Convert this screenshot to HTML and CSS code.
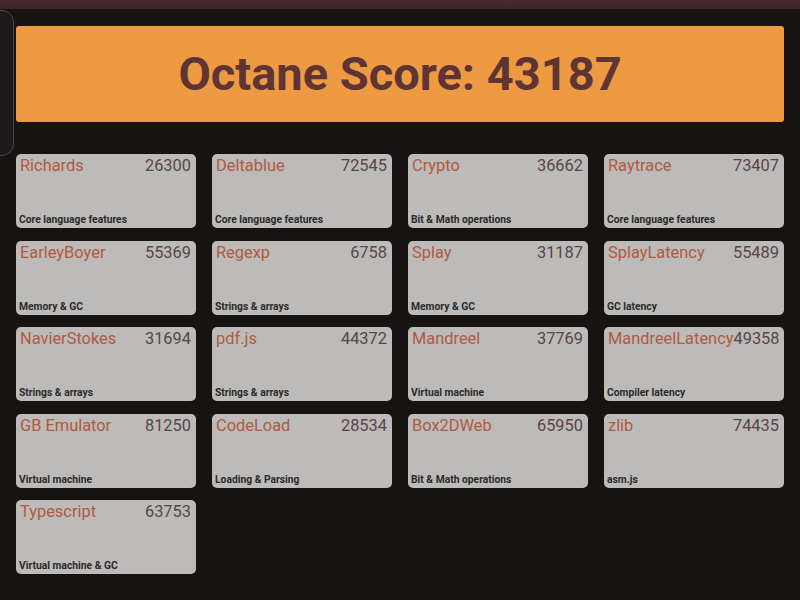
FILE: index.html
```html
<!DOCTYPE html>
<html>
<head>
<meta charset="utf-8">
<link rel="stylesheet" href="styles.css">
</head>
<body>
<div class="topbar"></div>
<div class="side-panel"></div>
<main class="page">
  <div class="banner">Octane Score: 43187</div>
  <div class="grid">
    <div class="card"><div class="head"><span class="name">Richards</span><span class="value">26300</span></div><div class="desc">Core language features</div></div>
    <div class="card"><div class="head"><span class="name">Deltablue</span><span class="value">72545</span></div><div class="desc">Core language features</div></div>
    <div class="card"><div class="head"><span class="name">Crypto</span><span class="value">36662</span></div><div class="desc">Bit &amp; Math operations</div></div>
    <div class="card"><div class="head"><span class="name">Raytrace</span><span class="value">73407</span></div><div class="desc">Core language features</div></div>
    <div class="card"><div class="head"><span class="name">EarleyBoyer</span><span class="value">55369</span></div><div class="desc">Memory &amp; GC</div></div>
    <div class="card"><div class="head"><span class="name">Regexp</span><span class="value">6758</span></div><div class="desc">Strings &amp; arrays</div></div>
    <div class="card"><div class="head"><span class="name">Splay</span><span class="value">31187</span></div><div class="desc">Memory &amp; GC</div></div>
    <div class="card"><div class="head"><span class="name">SplayLatency</span><span class="value">55489</span></div><div class="desc">GC latency</div></div>
    <div class="card"><div class="head"><span class="name">NavierStokes</span><span class="value">31694</span></div><div class="desc">Strings &amp; arrays</div></div>
    <div class="card"><div class="head"><span class="name">pdf.js</span><span class="value">44372</span></div><div class="desc">Strings &amp; arrays</div></div>
    <div class="card"><div class="head"><span class="name">Mandreel</span><span class="value">37769</span></div><div class="desc">Virtual machine</div></div>
    <div class="card"><div class="head"><span class="name">MandreelLatency</span><span class="value">49358</span></div><div class="desc">Compiler latency</div></div>
    <div class="card"><div class="head"><span class="name">GB Emulator</span><span class="value">81250</span></div><div class="desc">Virtual machine</div></div>
    <div class="card"><div class="head"><span class="name">CodeLoad</span><span class="value">28534</span></div><div class="desc">Loading &amp; Parsing</div></div>
    <div class="card"><div class="head"><span class="name">Box2DWeb</span><span class="value">65950</span></div><div class="desc">Bit &amp; Math operations</div></div>
    <div class="card"><div class="head"><span class="name">zlib</span><span class="value">74435</span></div><div class="desc">asm.js</div></div>
    <div class="card"><div class="head"><span class="name">Typescript</span><span class="value">63753</span></div><div class="desc">Virtual machine &amp; GC</div></div>
  </div>
</main>
</body>
</html>
```
FILE: styles.css
```css
html, body {
  margin: 0;
  padding: 0;
  background: #161312;
  font-family: Roboto, "Liberation Sans", sans-serif;
  width: 800px;
  height: 600px;
  overflow: hidden;
}
.topbar {
  height: 9px;
  background: linear-gradient(#4a2a2c, #402426);
}
.side-panel {
  position: absolute;
  left: -12px;
  top: 10px;
  width: 24px;
  height: 144px;
  border: 1px solid #4b4a4b;
  border-radius: 0 12px 12px 0;
  background: #1b191a;
}
.page {
  padding: 17px 16px 0 16px;
}
.banner {
  height: 96px;
  background: #ee9a43;
  border-radius: 3px;
  color: #5e3434;
  font-size: 47px;
  font-weight: 700;
  display: flex;
  align-items: center;
  justify-content: center;
  padding-bottom: 1px;
  box-sizing: border-box;
}
.grid {
  margin-top: 32px;
  display: grid;
  grid-template-columns: repeat(4, 180px);
  grid-auto-rows: 74px;
  column-gap: 16px;
  row-gap: 12.5px;
}
.card {
  background: #bdbbb9;
  border-radius: 5px;
  display: flex;
  flex-direction: column;
  justify-content: space-between;
  padding: 2px 5px 3px 4px;
  box-sizing: border-box;
}
.head {
  display: flex;
  justify-content: space-between;
  font-size: 16.4px;
  line-height: 20px;
}
.name {
  color: #b05a3e;
}
.value {
  color: #5a4546;
}
.desc {
  font-size: 10.3px;
  font-weight: 700;
  color: #2b2a2a;
  line-height: 11px;
  margin-left: -1px;
}
```
